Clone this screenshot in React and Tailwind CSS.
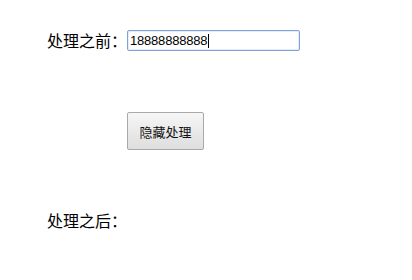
import React from "react";

const CJK = "font-['SimSun','Noto_Sans_CJK_SC',sans-serif]";

export default function App() {
  return (
    <div className={`min-h-[280px] bg-white pl-[47px] pt-[30px] text-black ${CJK}`}>
      {/* before */}
      <div className="flex items-center h-[21px]">
        <span className="w-[80px] text-[16px] leading-[21px]">处理之前：</span>
        <div className="w-[173px] h-[21px] border border-[#7fa2d9] rounded-[2px] bg-white flex items-center pl-[2px] shadow-[inset_0_0_0_1px_#e3ecf9]">
          <span className="font-['Liberation_Sans',Arial,sans-serif] text-[13px] leading-none tracking-[-0.2px]">
            18888888888
          </span>
          <span className="w-px h-[14px] bg-black ml-px" />
        </div>
      </div>

      {/* button */}
      <div className="mt-[61px] ml-[80px]">
        <button className="w-[77px] h-[38px] border border-[#a9a9a9] rounded-[2px] bg-gradient-to-b from-[#f6f6f6] to-[#dedede] text-[13px] leading-none text-[#111] font-['SimSun','Noto_Sans_CJK_SC',sans-serif]">
          隐藏处理
        </button>
      </div>

      {/* after */}
      <div className="mt-[60px] h-[21px] flex items-center">
        <span className="text-[16px] leading-[21px]">处理之后：</span>
      </div>
    </div>
  );
}
